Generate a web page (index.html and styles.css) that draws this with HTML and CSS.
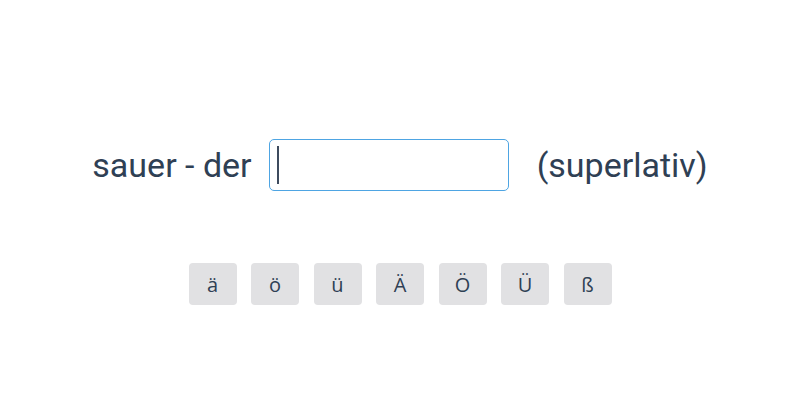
FILE: index.html
```html
<!DOCTYPE html>
<html lang="de">
<head>
<meta charset="utf-8">
<title>Superlativ</title>
<link rel="stylesheet" href="styles.css">
</head>
<body>
<main class="exercise">
  <div class="line">
    <span class="word">sauer - der</span>
    <span class="field"><input class="answer" type="text" aria-label="Antwort"><span class="caret"></span></span>
    <span class="word hint">(superlativ)</span>
  </div>
  <div class="keys">
    <button class="key">ä</button>
    <button class="key">ö</button>
    <button class="key">ü</button>
    <button class="key">Ä</button>
    <button class="key">Ö</button>
    <button class="key">Ü</button>
    <button class="key">ß</button>
  </div>
</main>
</body>
</html>
```
FILE: styles.css
```css
html, body {
  margin: 0;
  padding: 0;
  background: #ffffff;
}
.exercise {
  width: 800px;
  height: 400px;
  box-sizing: border-box;
  padding-top: 139px;
  display: flex;
  flex-direction: column;
  align-items: center;
  gap: 72px;
  font-family: Roboto, "Liberation Sans", sans-serif;
  color: #2f4054;
}
.line {
  display: flex;
  align-items: center;
  height: 52px;
}
.word {
  font-size: 34px;
  line-height: 52px;
}
.field {
  position: relative;
  display: block;
  margin-left: 17px;
  margin-right: 28px;
}
.answer {
  display: block;
  box-sizing: border-box;
  width: 240px;
  height: 52px;
  margin: 0;
  border: 1px solid #4ea5e3;
  border-radius: 5px;
  outline: none;
  background: #ffffff;
  font: 32px Roboto, sans-serif;
  color: #2f4054;
  padding: 0 8px;
  caret-color: transparent;
}
.caret {
  position: absolute;
  left: 8px;
  top: 7px;
  width: 2px;
  height: 38px;
  background: #3e4b5e;
}
.keys {
  display: flex;
  gap: 14.5px;
}
.key {
  width: 48px;
  height: 42px;
  padding: 0;
  border: none;
  border-radius: 4px;
  background: #e1e1e3;
  color: #2f4054;
  font-family: "Open Sans", sans-serif;
  font-size: 20px;
  margin: 0;
}
```
